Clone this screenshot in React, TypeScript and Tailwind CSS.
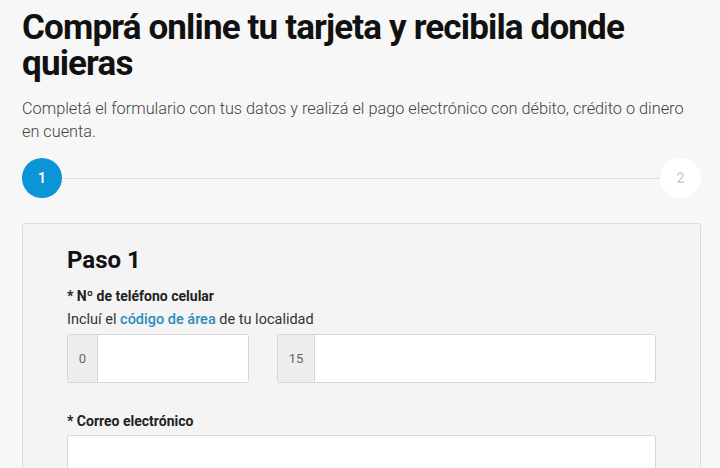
const PhoneField = ({ prefix, prefixWidth, className }: { prefix: string; prefixWidth: string; className: string }) => (
  <div className={`flex h-[49px] overflow-hidden rounded-[3px] border border-[#d6d6d6] bg-white ${className}`}>
    <div className={`flex ${prefixWidth} shrink-0 items-center justify-center border-r border-[#d6d6d6] bg-[#eeeeee] text-[13px] text-[#666]`}>
      {prefix}
    </div>
    <input className="min-w-0 flex-1 bg-white px-3 outline-none" />
  </div>
);

export default function App() {
  return (
    <div className="min-h-[468px] bg-[#f7f7f7] pl-[22px] pr-[19px] pt-[10px] font-['Roboto',sans-serif] text-[#111]">
      <h1 className="text-[35px] font-bold leading-[36px] tracking-[-0.85px]">
        Comprá online tu tarjeta y recibila donde quieras
      </h1>
      <p className="mt-[15px] text-[16.3px] font-light leading-[23px] text-[#444]">
        Completá el formulario con tus datos y realizá el pago electrónico con débito, crédito o dinero en cuenta.
      </p>

      <div className="mt-[15px] flex items-center">
        <div className="flex h-10 w-10 items-center justify-center rounded-full bg-[#0b95d7] text-[14px] font-semibold text-white">
          1
        </div>
        <div className="h-px flex-1 bg-[#dedede]" />
        <div className="flex h-10 w-[41px] items-center justify-center rounded-full bg-white text-[14px] font-medium text-[#cfcfcf]">
          2
        </div>
      </div>

      <div className="mt-[25px] rounded-t-[3px] border border-[#dcdcdc] bg-[#f4f4f4] px-[44px] pt-[22px] pb-8">
        <h2 className="text-[24px] font-bold leading-[28px]">Paso 1</h2>

        <label className="mt-[12px] block text-[14px] font-bold leading-[20px] text-[#222]">* Nº de teléfono celular</label>
        <p className="mt-[4px] text-[14.5px] leading-[20px] text-[#333]">
          Incluí el <span className="font-medium text-[#2b8db9]">código de área</span> de tu localidad
        </p>
        <div className="mt-[4px] flex gap-[28px]">
          <PhoneField prefix="0" prefixWidth="w-[30px]" className="w-[182px]" />
          <PhoneField prefix="15" prefixWidth="w-[37px]" className="flex-1" />
        </div>

        <label className="mt-[28px] block text-[14px] font-bold leading-[20px] text-[#222]">* Correo electrónico</label>
        <div className="mt-[4px] h-[49px] rounded-[3px] border border-[#d6d6d6] bg-white" />
      </div>
    </div>
  );
}
